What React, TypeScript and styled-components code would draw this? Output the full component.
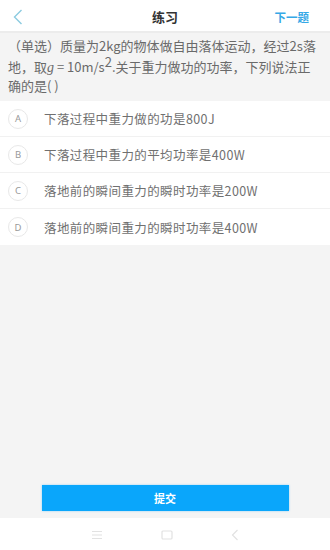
import React from "react";
import styled, { createGlobalStyle } from "styled-components";

const GlobalStyle = createGlobalStyle`
  html, body {
    margin: 0;
    padding: 0;
    background: #f4f4f4;
  }
  body {
    font-family: "Noto Sans CJK SC", "Noto Sans", sans-serif;
  }
`;

const Page = styled.div`
  width: 330px;
  height: 550px;
  display: flex;
  flex-direction: column;
  background: #f4f4f4;
  overflow: hidden;
`;

const Header = styled.header`
  height: 33px;
  padding-top: 2px;
  box-sizing: border-box;
  display: grid;
  grid-template-columns: 60px 1fr 60px;
  align-items: center;
  background: #fff;
  border-bottom: 2px solid #ececec;
`;

const BackButton = styled.div`
  display: flex;
  align-items: center;
  padding-left: 13px;
`;

const Title = styled.h1`
  margin: 0;
  text-align: center;
  font-size: 13px;
  font-weight: 700;
  color: #333;
`;

const NextLink = styled.span`
  text-align: right;
  padding-right: 21px;
  font-size: 11.5px;
  font-weight: 700;
  color: #35a8e6;
  white-space: nowrap;
`;

const Question = styled.div`
  height: 68px;
  box-sizing: border-box;
  padding: 3px 8px 0;
  font-size: 13px;
  line-height: 19px;
  color: #6a6a6a;
  background: #f4f4f4;
`;

const Sup = styled.span`
  display: inline-block;
  font-size: 13px;
  line-height: 13px;
  vertical-align: 5px;
`;

const Var = styled.span`
  display: inline-block;
  font-family: "Liberation Serif", serif;
  font-style: italic;
  font-size: 14px;
  line-height: 14px;
`;

const OptionList = styled.ul`
  list-style: none;
  margin: 0;
  padding: 0;
  background: #fff;
`;

const OptionRow = styled.li`
  height: 36px;
  box-sizing: border-box;
  display: flex;
  align-items: center;
  padding-left: 8px;
  border-bottom: 1px solid #f1f1f1;
  &:last-child {
    border-bottom: none;
  }
`;

const Letter = styled.span`
  width: 20px;
  height: 20px;
  box-sizing: border-box;
  border-radius: 50%;
  border: 1px solid #e8e8e8;
  display: flex;
  align-items: center;
  justify-content: center;
  font-family: "Noto Sans", sans-serif;
  font-size: 9.5px;
  color: #999;
  margin-right: 16px;
`;

const OptionText = styled.span`
  font-size: 12.5px;
  letter-spacing: 0.4px;
  color: #707070;
`;

const Filler = styled.div`
  flex: 1;
  display: flex;
  flex-direction: column;
  justify-content: flex-end;
  align-items: center;
  padding-bottom: 7px;
`;

const SubmitButton = styled.button`
  width: 247px;
  height: 26px;
  border: none;
  background: #0aa6fb;
  color: #fff;
  font-family: "Noto Sans CJK SC", sans-serif;
  font-size: 11px;
  font-weight: 700;
  padding: 0;
  box-shadow: 0 0 2px rgba(10, 166, 251, 0.4);
`;

const NavBar = styled.nav`
  height: 32px;
  background: #fff;
  display: flex;
  align-items: center;
  justify-content: center;
  gap: 58px;
  padding-top: 2px;
  box-sizing: border-box;
`;

const options = [
  { key: "A", text: "下落过程中重力做的功是800J" },
  { key: "B", text: "下落过程中重力的平均功率是400W" },
  { key: "C", text: "落地前的瞬间重力的瞬时功率是200W" },
  { key: "D", text: "落地前的瞬间重力的瞬时功率是400W" },
];

export default function App() {
  return (
    <Page>
      <GlobalStyle />
      <Header>
        <BackButton>
          <svg width="10" height="16" viewBox="0 0 10 16">
            <path d="M8.5 1 L1.5 8 L8.5 15" fill="none" stroke="#8ccbe0" strokeWidth="1.4" />
          </svg>
        </BackButton>
        <Title>练习</Title>
        <NextLink>下一题</NextLink>
      </Header>
      <Question>
        （单选）质量为2kg的物体做自由落体运动，经过2s落地，取<Var>g</Var> = 10m/s<Sup>2</Sup>.关于重力做功的功率，下列说法正确的是(&nbsp;)
      </Question>
      <OptionList>
        {options.map((o) => (
          <OptionRow key={o.key}>
            <Letter>{o.key}</Letter>
            <OptionText>{o.text}</OptionText>
          </OptionRow>
        ))}
      </OptionList>
      <Filler>
        <SubmitButton>提交</SubmitButton>
      </Filler>
      <NavBar>
        <svg width="12" height="10" viewBox="0 0 12 10">
          <path d="M1 1.5 H11 M1 5 H11 M1 8.5 H11" stroke="#e2e2e2" strokeWidth="1.2" />
        </svg>
        <svg width="12" height="10" viewBox="0 0 12 10">
          <rect x="1" y="1" width="10" height="8" rx="1" fill="none" stroke="#e2e2e2" strokeWidth="1.2" />
        </svg>
        <svg width="8" height="12" viewBox="0 0 8 12">
          <path d="M6.5 1 L1.5 6 L6.5 11" fill="none" stroke="#e2e2e2" strokeWidth="1.2" />
        </svg>
      </NavBar>
    </Page>
  );
}
